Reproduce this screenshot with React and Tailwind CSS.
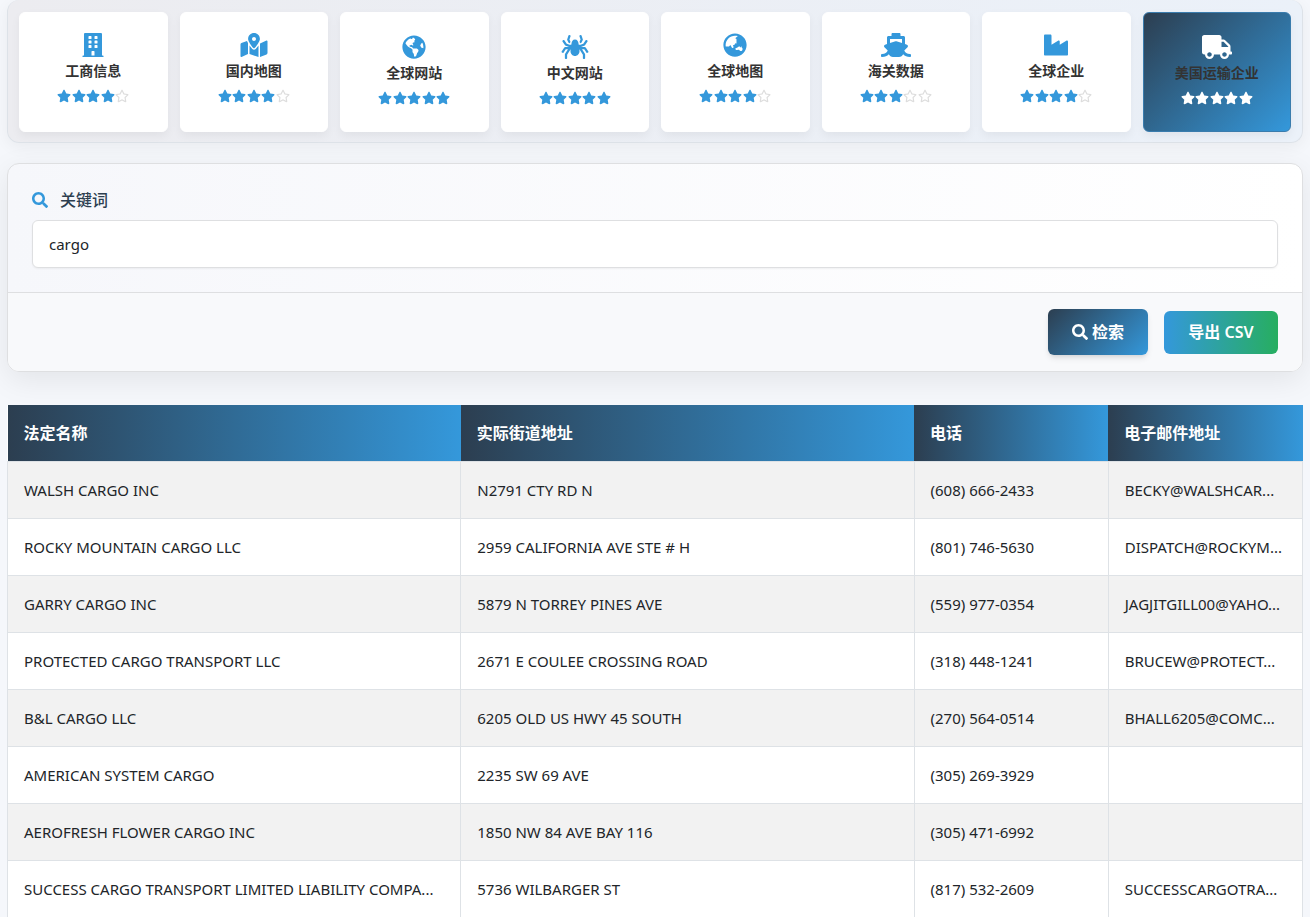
import { useState } from 'react';
import {
  FaBuilding,
  FaMapMarkedAlt,
  FaGlobeAmericas,
  FaSpider,
  FaGlobeAsia,
  FaShip,
  FaIndustry,
  FaTruck,
  FaSearch,
  FaStar,
  FaRegStar
} from 'react-icons/fa';

const sources = [
  { id: 'business', label: '工商信息', icon: FaBuilding, stars: 4 },
  { id: 'cnmap', label: '国内地图', icon: FaMapMarkedAlt, stars: 4 },
  { id: 'web', label: '全球网站', icon: FaGlobeAmericas, stars: 5 },
  { id: 'cnweb', label: '中文网站', icon: FaSpider, stars: 5 },
  { id: 'map', label: '全球地图', icon: FaGlobeAsia, stars: 4 },
  { id: 'customs', label: '海关数据', icon: FaShip, stars: 3 },
  { id: 'company', label: '全球企业', icon: FaIndustry, stars: 4 },
  { id: 'carrier', label: '美国运输企业', icon: FaTruck, stars: 5 }
];

const columns = [
  { label: '法定名称', width: 'w-[35%]' },
  { label: '实际街道地址', width: 'w-[35%]' },
  { label: '电话', width: 'w-[15%]' },
  { label: '电子邮件地址', width: 'w-[15%]' }
];

const rows = [
  ['WALSH CARGO INC', 'N2791 CTY RD N', '(608) 666-2433', 'BECKY@WALSHCAR...'],
  ['ROCKY MOUNTAIN CARGO LLC', '2959 CALIFORNIA AVE STE # H', '(801) 746-5630', 'DISPATCH@ROCKYM...'],
  ['GARRY CARGO INC', '5879 N TORREY PINES AVE', '(559) 977-0354', 'JAGJITGILL00@YAHO...'],
  ['PROTECTED CARGO TRANSPORT LLC', '2671 E COULEE CROSSING ROAD', '(318) 448-1241', 'BRUCEW@PROTECT...'],
  ['B&L CARGO LLC', '6205 OLD US HWY 45 SOUTH', '(270) 564-0514', 'BHALL6205@COMC...'],
  ['AMERICAN SYSTEM CARGO', '2235 SW 69 AVE', '(305) 269-3929', ''],
  ['AEROFRESH FLOWER CARGO INC', '1850 NW 84 AVE BAY 116', '(305) 471-6992', ''],
  ['SUCCESS CARGO TRANSPORT LIMITED LIABILITY COMPA...', '5736 WILBARGER ST', '(817) 532-2609', 'SUCCESSCARGOTRA...']
];

function Stars({ count, active }) {
  return (
    <span className={`mt-2 flex w-[72px] items-start justify-between ${count === 5 ? 'h-[18px]' : 'h-[22px]'}`}>
      {[1, 2, 3, 4, 5].map((n) =>
        n <= count ? (
          <FaStar key={n} className={`size-[14px] ${active ? 'text-white' : 'text-[#3498db]'}`} />
        ) : (
          <FaRegStar key={n} className="size-[14px] text-[#dddddd]" />
        )
      )}
    </span>
  );
}

function SourceCard({ source, active, onSelect }) {
  const Icon = source.icon;
  return (
    <button
      type="button"
      onClick={() => onSelect(source.id)}
      className={`flex h-[120px] flex-1 flex-col items-center justify-center rounded-md border shadow-[0_4px_10px_rgba(0,0,0,0.05)] cursor-pointer ${
        active
          ? 'border-[#3a7cad] bg-linear-135/srgb from-[#2c3e50] to-[#3498db]'
          : 'border-white bg-white'
      }`}
    >
      <Icon className={`h-6 w-[30px] ${active ? 'text-white' : 'text-[#3498db]'}`} />
      <span className="mt-1 text-sm leading-5 font-bold text-[#333333]">{source.label}</span>
      <Stars count={source.stars} active={active} />
    </button>
  );
}

function ResultsTable() {
  return (
    <table className="mt-[33px] w-full table-fixed border-collapse bg-white text-left text-[15px] leading-6 text-[#212529]">
      <thead>
        <tr>
          {columns.map((col) => (
            <th
              key={col.label}
              className={`${col.width} h-14 bg-linear-to-r/srgb from-[#2c3e50] to-[#3498db] px-4 text-base font-bold text-white`}
            >
              {col.label}
            </th>
          ))}
        </tr>
      </thead>
      <tbody>
        {rows.map((row) => (
          <tr key={row[0]} className="odd:bg-[#f2f2f2]">
            {row.map((cell, i) => (
              <td key={i} className="h-[57px] truncate border border-[#dee2e6] px-4">
                {cell}
              </td>
            ))}
          </tr>
        ))}
      </tbody>
    </table>
  );
}

export default function App() {
  const [current, setCurrent] = useState('carrier');
  const [keyword, setKeyword] = useState('cargo');

  return (
    <div className="h-screen overflow-hidden bg-[#f5f7fb] px-[7px] font-['Noto_Sans','Noto_Sans_CJK_SC',sans-serif]">
      <nav className="flex gap-3 rounded-xl border border-t-0 border-[#dde2e8] bg-linear-to-r/srgb from-[#ececf0] to-[#ebf1f9] px-[11px] pt-3 pb-[10px] shadow-[0_4px_15px_rgba(0,0,0,0.05)]">
        {sources.map((s) => (
          <SourceCard key={s.id} source={s} active={s.id === current} onSelect={setCurrent} />
        ))}
      </nav>

      {/* Search form */}
      <form
        onSubmit={(e) => e.preventDefault()}
        className="mt-5 overflow-hidden rounded-xl border border-[#dedfe1] bg-linear-to-r/srgb from-[#f6f7fb] to-white shadow-[0_8px_30px_rgba(0,0,0,0.08)]"
      >
        <div className="p-6">
          <label htmlFor="keyword" className="flex items-center gap-3 leading-6 font-medium text-[#2c3e50]">
            <FaSearch className="size-4 text-[#3498db]" />
            关键词
          </label>
          <input
            id="keyword"
            type="text"
            value={keyword}
            onChange={(e) => setKeyword(e.target.value)}
            className="mt-2 h-12 w-full rounded-md border border-[#dedfe1] bg-white px-4 text-[15px] text-[#212529] shadow-xs outline-none"
          />
        </div>
        <div className="flex items-center justify-end gap-4 border-t border-[#dedfe1] bg-[#f8f9fb] px-6 py-4">
          <button
            type="submit"
            className="flex h-[46px] w-[100px] items-center justify-center gap-1 rounded-md bg-linear-135/srgb from-[#2c3e50] to-[#3498db] font-bold text-white shadow-md cursor-pointer"
          >
            <FaSearch className="size-4" />
            检索
          </button>
          <button
            type="button"
            className="h-[43px] w-[114px] rounded-md bg-linear-to-r/srgb from-[#3498db] to-[#27ae60] font-semibold text-white cursor-pointer"
          >
            导出 CSV
          </button>
        </div>
      </form>

      <ResultsTable />
    </div>
  );
}
